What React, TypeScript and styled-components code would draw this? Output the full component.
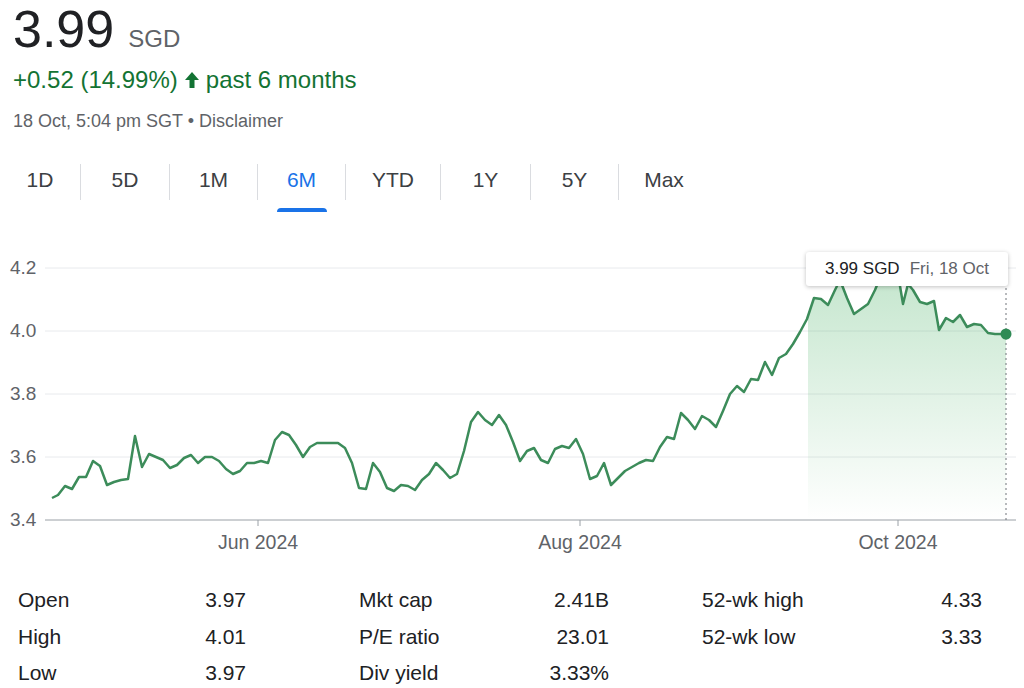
import React from 'react';
import styled, { createGlobalStyle } from 'styled-components';

const GlobalStyle = createGlobalStyle`
  body { margin: 0; background: #fff; font-family: "Liberation Sans", Arial, sans-serif; color: #202124; }
`;

const pts: [number, number][] = [
  [52,496],[58,493],[65,484],[72,487],[79,475],[86,475],[93,459],[100,464],[107,483],[114,480],[121,478],[128,477],[135,434],[142,465],[149,452],[156,455],[163,458],[170,466],[177,463],[184,456],[191,453],[198,461],[205,455],[212,455],[219,459],[226,467],[233,472],[240,469],[247,461],[254,461],[261,459],[268,461],[275,438],[282,430],[289,433],[296,443],[303,455],[310,445],[317,441],[324,441],[331,441],[338,441],[345,446],[352,461],[359,486],[366,487],[373,461],[380,470],[387,486],[394,489],[401,483],[408,484],[415,488],[422,478],[429,472],[436,461],[443,468],[450,476],[457,472],[464,449],[471,420],[478,410],[485,418],[492,423],[499,413],[506,423],[513,440],[520,459],[527,449],[534,446],[541,458],[548,461],[555,447],[562,444],[569,446],[576,437],[583,452],[590,477],[597,474],[604,461],[611,483],[618,476],[625,469],[632,465],[639,461],[646,458],[653,459],[660,445],[667,435],[674,437],[681,411],[688,418],[695,427],[702,414],[709,418],[716,425],[723,409],[730,392],[737,384],[744,390],[751,377],[758,378],[765,360],[772,373],[779,356],[786,352],[793,342],[800,330],[807,317],[814,296],[821,297],[828,303],[835,288],[840,278],[847,296],[854,312],[861,307],[868,302],[875,288],[880,276],[885,282],[892,278],[899,278],[903,302],[908,282],[913,288],[920,300],[927,302],[934,299],[939,328],[946,316],[953,320],[960,313],[967,325],[974,322],[981,323],[988,331],[995,332],[1006,332],
];
const TOP = 232;
const FONT = 'Liberation Sans, Arial, sans-serif';

const tabs = ['1D', '5D', '1M', '6M', 'YTD', '1Y', '5Y', 'Max'];
const tabW = [80, 88, 87, 87, 94, 89, 87, 90];

const stats: { left: number; width: number; rows: string[][] }[] = [
  { left: 18, width: 228, rows: [['Open', '3.97'], ['High', '4.01'], ['Low', '3.97']] },
  { left: 113, width: 250, rows: [['Mkt cap', '2.41B'], ['P/E ratio', '23.01'], ['Div yield', '3.33%']] },
  { left: 93, width: 280, rows: [['52-wk high', '4.33'], ['52-wk low', '3.33']] },
];

const Page = styled.div`
  width: 1024px;
  height: 688px;
  overflow: hidden;
`;
const Header = styled.div`
  padding-left: 13px;
`;
const PriceRow = styled.div`
  display: flex;
  align-items: baseline;
  gap: 14px;
  height: 58px;
`;
const Price = styled.span`
  font-size: 52px;
  line-height: 58px;
`;
const Currency = styled.span`
  font-size: 24px;
  color: #5f6368;
`;
const Change = styled.div`
  color: #137333;
  font-size: 24px;
  margin-top: 8px;
  display: flex;
  align-items: center;
  gap: 6px;
`;
const Meta = styled.div`
  color: #5f6368;
  font-size: 18px;
  margin-top: 17px;
`;
const Tabs = styled.div`
  display: flex;
  margin-top: 24px;
  height: 54px;
`;
const Tab = styled.div<{ $active?: boolean; $w: number; $sep: boolean }>`
  position: relative;
  width: ${p => p.$w}px;
  display: flex;
  justify-content: center;
  align-items: center;
  padding-bottom: 4px;
  font-size: 21px;
  color: ${p => (p.$active ? '#1a73e8' : '#3c4043')};
  border-right: ${p => (p.$sep ? '1px solid #dadce0' : 'none')};
  margin: 8px 0 10px;
  &::after {
    content: '';
    display: ${p => (p.$active ? 'block' : 'none')};
    position: absolute;
    left: 50%;
    bottom: -12px;
    width: 50px;
    margin-left: -25px;
    height: 4px;
    border-radius: 4px 4px 0 0;
    background: #1a73e8;
  }
`;
const ChartWrap = styled.div`
  position: relative;
  height: 330px;
  margin-top: 24px;
`;
const Tooltip = styled.div`
  position: absolute;
  left: 806px;
  top: 18px;
  width: 202px;
  height: 34px;
  background: #fff;
  box-shadow: 0 1px 4px rgba(0,0,0,0.25);
  border-radius: 3px;
  display: flex;
  align-items: center;
  justify-content: center;
  gap: 10px;
  font-size: 17px;
`;
const TipDate = styled.span`
  color: #5f6368;
`;
const Stats = styled.div`
  display: flex;
  margin-top: 24px;
`;
const StatCol = styled.div<{ $left: number; $w: number }>`
  display: flex;
  flex-direction: column;
  margin-left: ${p => p.$left}px;
  width: ${p => p.$w}px;
`;
const StatRow = styled.div`
  display: flex;
  justify-content: space-between;
  height: 36.5px;
  font-size: 21px;
`;

export default function App() {
  const line = pts.map(([x, y], i) => `${i ? 'L' : 'M'}${x},${y - TOP}`).join(' ');
  const area = `${line} L1006,${518 - TOP} L52,${518 - TOP} Z`;
  const grid = [266, 329, 392, 455, 518];
  const labels = ['4.2', '4.0', '3.8', '3.6', '3.4'];
  return (
    <Page>
      <GlobalStyle />
      <Header>
        <PriceRow>
          <Price>3.99</Price>
          <Currency>SGD</Currency>
        </PriceRow>
        <Change>
          +0.52 (14.99%)
          <svg width="16" height="18" viewBox="0 0 16 18">
            <path d="M8 1 L15 9 L10.5 9 L10.5 17 L5.5 17 L5.5 9 L1 9 Z" fill="#137333" />
          </svg>
          past 6 months
        </Change>
        <Meta>18 Oct, 5:04 pm SGT • Disclaimer</Meta>
      </Header>
      <Tabs>
        {tabs.map((t, i) => (
          <Tab key={t} $w={tabW[i]} $active={t === '6M'} $sep={i < tabs.length - 1}>
            {t}
          </Tab>
        ))}
      </Tabs>
      <ChartWrap>
        <svg width="1024" height="330" style={{ display: 'block' }}>
          <defs>
            <linearGradient id="fill" x1="0" y1="0" x2="0" y2="1">
              <stop offset="0" stopColor="#34a853" stopOpacity="0.28" />
              <stop offset="1" stopColor="#34a853" stopOpacity="0" />
            </linearGradient>
            <clipPath id="clip">
              <rect x="808" y="0" width="200" height="300" />
            </clipPath>
          </defs>
          {grid.map((g, i) => (
            <g key={g}>
              <line x1="45" x2="1016" y1={g - TOP} y2={g - TOP} stroke={i === 4 ? '#9aa0a6' : '#e8eaed'} />
              <text x="10" y={g - TOP + 6} fontSize="19" fill="#5f6368" fontFamily={FONT}>{labels[i]}</text>
            </g>
          ))}
          {[258, 580, 898].map(x => (
            <line key={x} x1={x} x2={x} y1={518 - TOP} y2={524 - TOP} stroke="#9aa0a6" />
          ))}
          {([['Jun 2024', 258], ['Aug 2024', 580], ['Oct 2024', 898]] as [string, number][]).map(([t, x]) => (
            <text key={t} x={x} y={547 - TOP} textAnchor="middle" fontSize="19.5" fill="#5f6368" fontFamily={FONT}>{t}</text>
          ))}
          <path d={area} fill="url(#fill)" clipPath="url(#clip)" />
          <line x1="1006" x2="1006" y1={286 - TOP} y2={518 - TOP} stroke="#70757a" strokeDasharray="2 3" />
          <path d={line} fill="none" stroke="#3c8c5a" strokeWidth="2.5" strokeLinejoin="round" />
          <circle cx="1006" cy={332 - TOP} r="5.5" fill="#2f8a55" />
        </svg>
        <Tooltip>
          <span>3.99 SGD</span>
          <TipDate>Fri, 18 Oct</TipDate>
        </Tooltip>
      </ChartWrap>
      <Stats>
        {stats.map((col, i) => (
          <StatCol key={i} $left={col.left} $w={col.width}>
            {col.rows.map(([k, v]) => (
              <StatRow key={k}>
                <span>{k}</span>
                <span>{v}</span>
              </StatRow>
            ))}
          </StatCol>
        ))}
      </Stats>
    </Page>
  );
}
